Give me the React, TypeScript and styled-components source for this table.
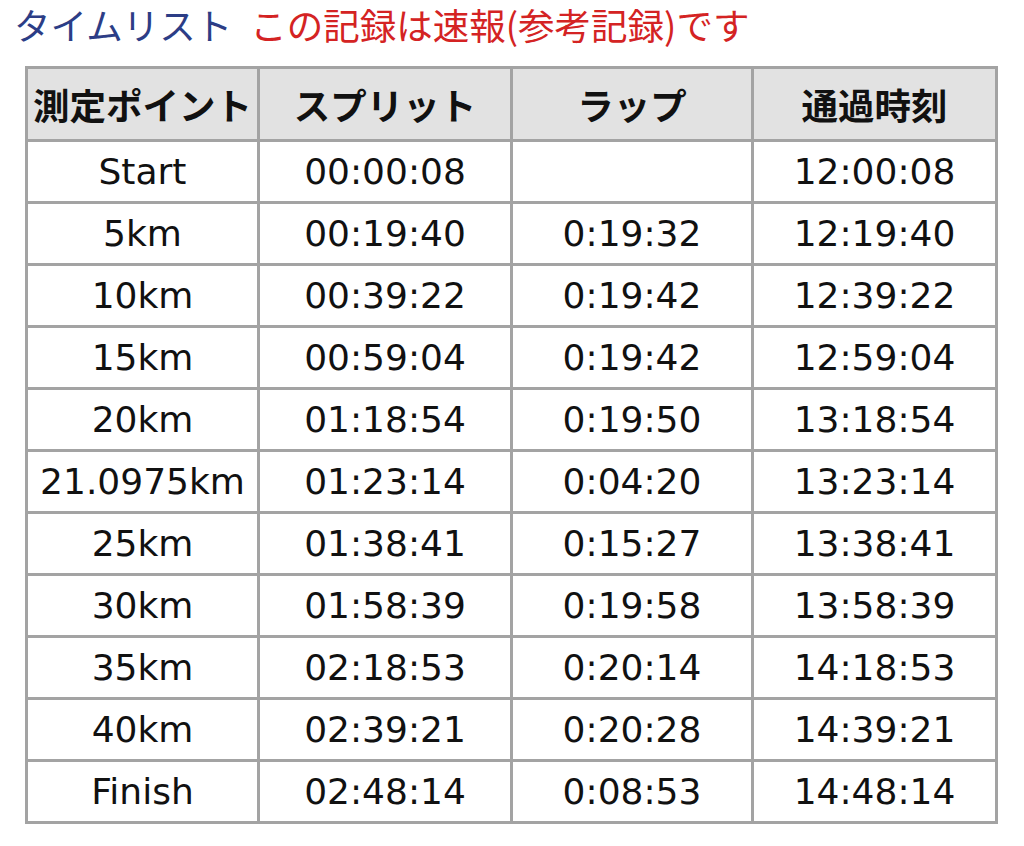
import styled, { createGlobalStyle } from "styled-components";

const GlobalStyle = createGlobalStyle`
  html, body {
    margin: 0;
    padding: 0;
    background: #ffffff;
  }
  body {
    font-family: "Noto Sans CJK JP", "Noto Sans", sans-serif;
    color: #111;
  }
`;

const Page = styled.div`
  padding: 3px 0 0 14px;
`;

const Title = styled.div`
  font-size: 36.5px;
  line-height: 43px;
  white-space: nowrap;
`;

const Blue = styled.span`
  color: #2c3d86;
`;

const Red = styled.span`
  color: #d42323;
  margin-left: 18px;
`;

const Table = styled.table`
  margin: 20px 0 0 11px;
  border-collapse: collapse;
  table-layout: fixed;
`;

const Th = styled.th<{ $w: number }>`
  width: ${(p) => p.$w}px;
  height: 70px;
  padding: 0;
  background: #e2e2e2;
  border: 3px solid #a3a3a3;
  font-size: 36.5px;
  font-weight: 700;
  text-align: center;
  white-space: nowrap;
  color: #111;
`;

const Td = styled.td`
  height: 59px;
  padding: 0;
  border: 3px solid #a3a3a3;
  font-family: "DejaVu Sans", "Noto Sans CJK JP", sans-serif;
  font-size: 36px;
  text-align: center;
  white-space: nowrap;
  color: #111;
`;

const rows: [string, string, string, string][] = [
  ["Start", "00:00:08", "", "12:00:08"],
  ["5km", "00:19:40", "0:19:32", "12:19:40"],
  ["10km", "00:39:22", "0:19:42", "12:39:22"],
  ["15km", "00:59:04", "0:19:42", "12:59:04"],
  ["20km", "01:18:54", "0:19:50", "13:18:54"],
  ["21.0975km", "01:23:14", "0:04:20", "13:23:14"],
  ["25km", "01:38:41", "0:15:27", "13:38:41"],
  ["30km", "01:58:39", "0:19:58", "13:58:39"],
  ["35km", "02:18:53", "0:20:14", "14:18:53"],
  ["40km", "02:39:21", "0:20:28", "14:39:21"],
  ["Finish", "02:48:14", "0:08:53", "14:48:14"],
];

export default function App() {
  return (
    <>
      <GlobalStyle />
      <Page>
        <Title>
          <Blue>タイムリスト</Blue>
          <Red>この記録は速報(参考記録)です</Red>
        </Title>
        <Table>
          <thead>
            <tr>
              <Th $w={229}>測定ポイント</Th>
              <Th $w={250}>スプリット</Th>
              <Th $w={238}>ラップ</Th>
              <Th $w={241}>通過時刻</Th>
            </tr>
          </thead>
          <tbody>
            {rows.map((r) => (
              <tr key={r[0]}>
                {r.map((c, i) => (
                  <Td key={i}>{c}</Td>
                ))}
              </tr>
            ))}
          </tbody>
        </Table>
      </Page>
    </>
  );
}
